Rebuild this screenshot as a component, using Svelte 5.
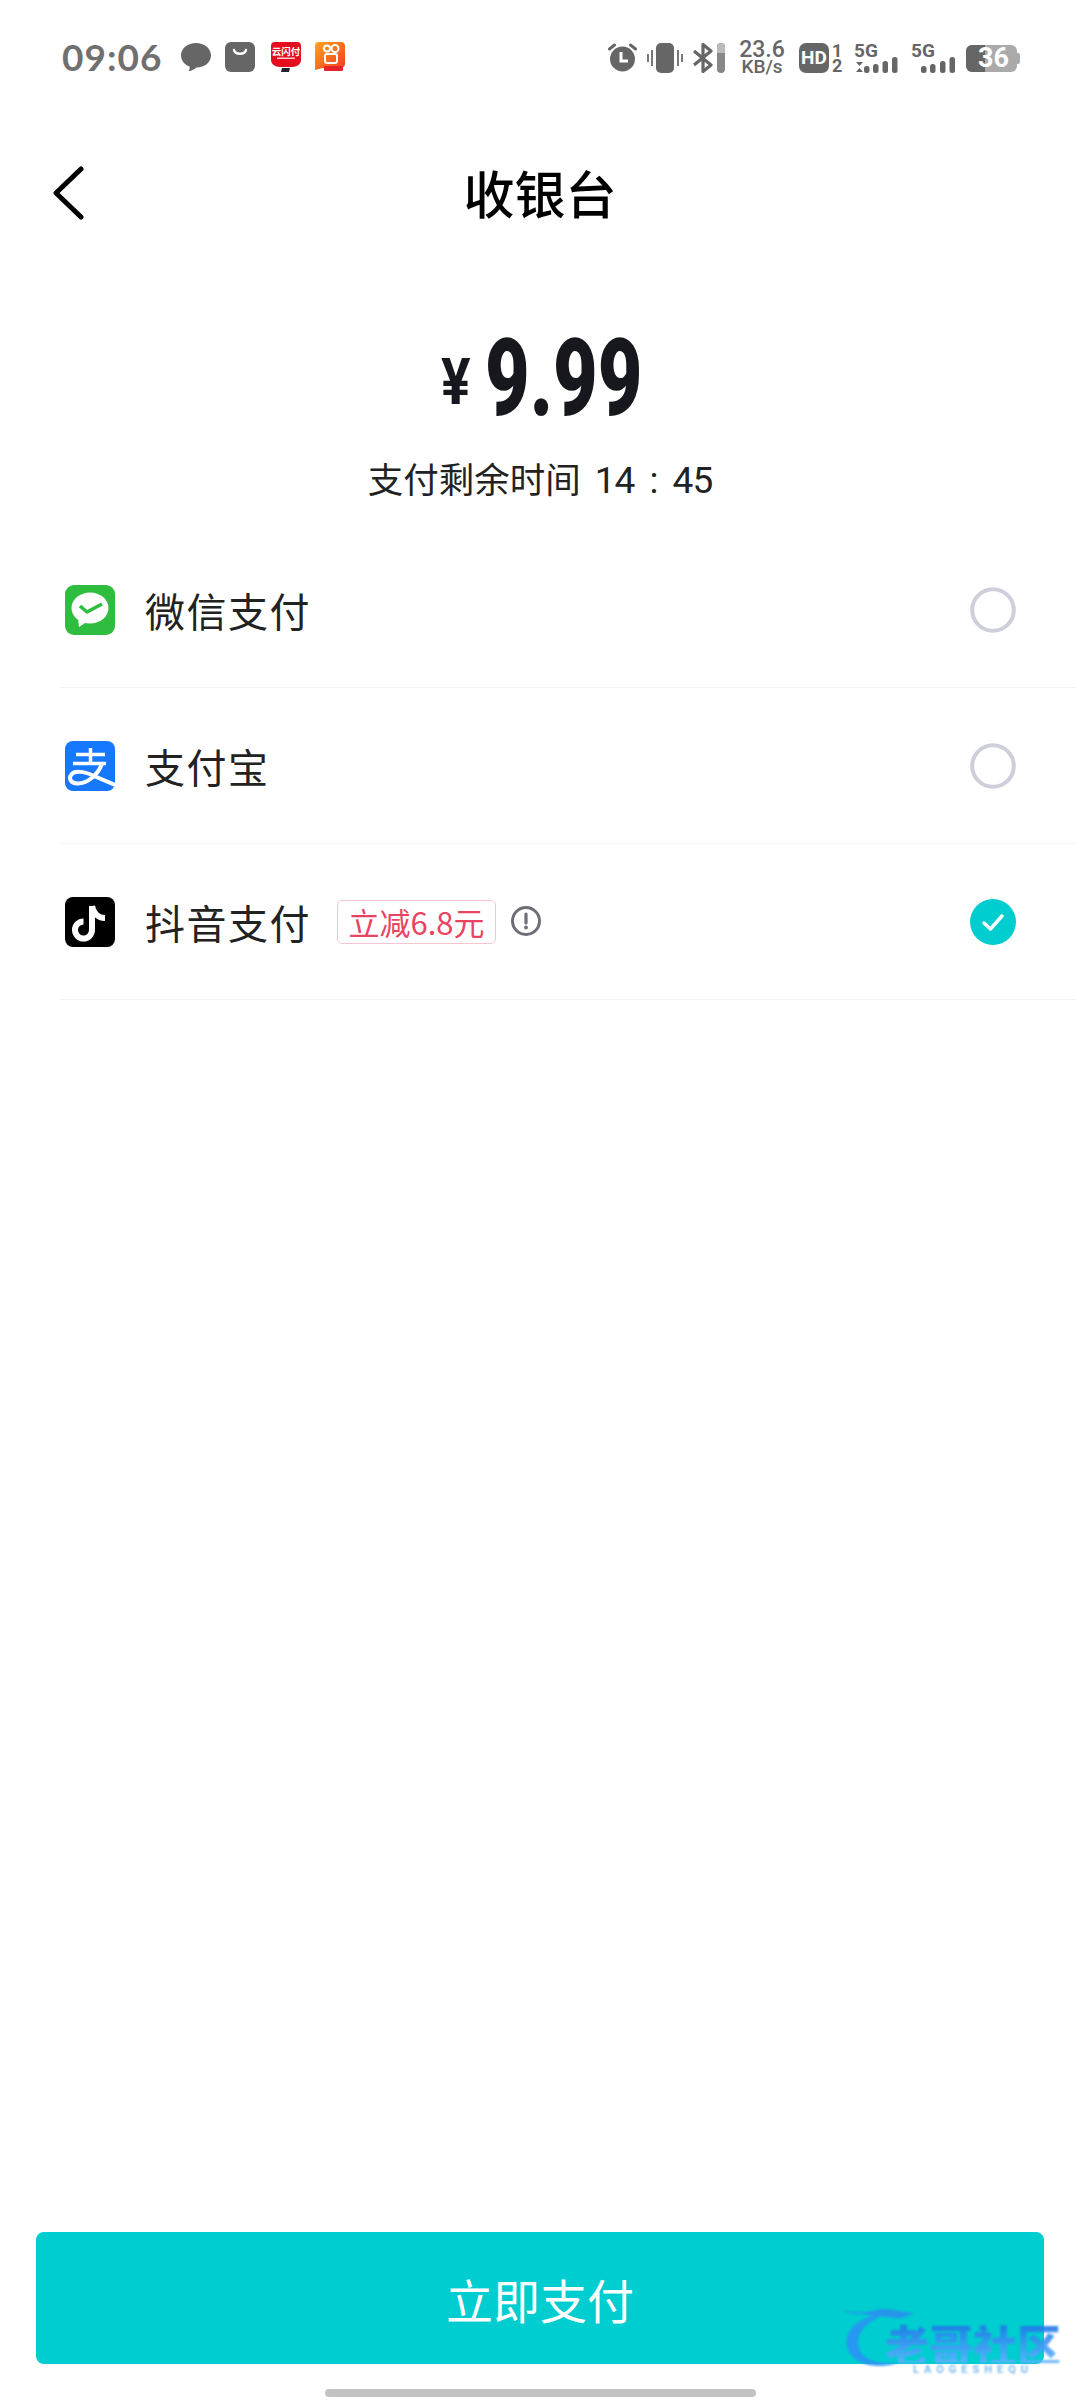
<!-- Checkout screen: amount, payment method list and pay button. -->
<script lang="ts">
    const methods = [
        { id: "wechat", name: "微信支付" },
        { id: "alipay", name: "支付宝" },
        { id: "douyin", name: "抖音支付", promo: "立减6.8元" },
    ];

    let selected = $state("douyin");
</script>

<div class="page">
    <div class="status">
        <span class="time">09:06</span>
        <svg class="ml17" width="30" height="30" viewBox="0 0 30 30">
            <path fill="#666" d="M15 1C7 1 0 6 0 13.500c0 5 3.500 9 8.500 11 .6 1.500-.2 3.500-1 4.500 3 .2 6-2 8-3.500C23.500 25.500 30 20.500 30 13.500 30 6 23 1 15 1z" />
        </svg>
        <svg class="ml14" width="30" height="30" viewBox="0 0 30 30">
            <rect width="30" height="30" rx="6" fill="#666" />
            <path d="M9 8c1 5 11 5 12 0" fill="none" stroke="#fff" stroke-width="2.500" stroke-linecap="round" />
        </svg>
        <svg class="ml16" width="30" height="30" viewBox="0 0 30 30">
            <path fill="#e60d1f" d="M4 0h22a4 4 0 0 1 4 4v14c0 4-4 7-9 7H9c-5 0-9-3-9-7V4a4 4 0 0 1 4-4z" />
            <text x="15" y="13" text-anchor="middle" class="tiny-cn">云闪付</text>
            <rect x="6" y="15.500" width="18" height="1.500" fill="#fff" opacity="0.8" />
            <path fill="#223" d="M11 26h8l-1 4h-8z" />
        </svg>
        <svg class="ml14" width="30" height="30" viewBox="0 0 30 30">
            <defs>
                <linearGradient id="ks" x1="0" y1="0" x2="1" y2="1">
                    <stop offset="0" stop-color="#ffa51c" />
                    <stop offset="1" stop-color="#f0391f" />
                </linearGradient>
            </defs>
            <path fill="url(#ks)" d="M4 0h22a4 4 0 0 1 4 4v18c0 2-2 4-4 4H8l-8 2V4a4 4 0 0 1 4-4z" />
            <circle cx="12" cy="6.500" r="3" fill="none" stroke="#fff" stroke-width="2" />
            <circle cx="20" cy="6.500" r="3.500" fill="none" stroke="#fff" stroke-width="2" />
            <rect x="10" y="12" width="12" height="9" rx="2" fill="none" stroke="#fff" stroke-width="2" />
            <rect x="9" y="24" width="19" height="5" rx="1" fill="#e8222a" />
        </svg>

        <div class="status-right">
            <svg width="29" height="29" viewBox="0 0 29 29">
                <circle cx="14.500" cy="16" r="12.500" fill="#666" />
                <path d="M1.500 6l5-4M27.500 6l-5-4" stroke="#666" stroke-width="3" stroke-linecap="round" />
                <path d="M13 9v9h7" fill="none" stroke="#fff" stroke-width="3" />
            </svg>
            <svg class="ml10" width="36" height="30" viewBox="0 0 36 30">
                <rect x="9" y="0" width="18" height="30" rx="5" fill="#666" />
                <path d="M1 11v8M5 7v16M31 7v16M35 11v8" stroke="#777" stroke-width="2" />
            </svg>
            <svg class="ml10" width="32" height="30" viewBox="0 0 32 30">
                <path d="M1 8l17 14-8 6.500V1.500l8 6.500L1 22" fill="none" stroke="#666" stroke-width="3.200" stroke-linejoin="round" />
                <rect x="24" y="0" width="8" height="30" rx="4" fill="#888" />
                <path d="M24 10V4a4 4 0 0 1 8 0v6z" fill="#bbb" />
            </svg>
            <div class="speed ml15">
                <span>23.6</span>
                <span class="unit">KB/s</span>
            </div>
            <div class="hd ml15">
                <span class="hd-box">HD</span>
                <div class="sims">
                    <span>1</span>
                    <span>2</span>
                </div>
            </div>
            <div class="signal ml12">
                <span class="net">5G</span>
                <svg width="44" height="31" viewBox="0 0 44 31">
                    <path fill="#666" d="M2 19l3.500 4 3.500-4zM2 29h7l-3.500-4z" />
                    <rect x="10" y="23" width="5.500" height="7" rx="2.500" fill="#666" />
                    <rect x="19" y="21" width="5.500" height="9" rx="2.500" fill="#666" />
                    <rect x="28.500" y="18" width="5.500" height="12" rx="2.500" fill="#666" />
                    <rect x="38" y="14" width="5.500" height="16" rx="2.500" fill="#666" />
                </svg>
            </div>
            <div class="signal ml13">
                <span class="net">5G</span>
                <svg width="44" height="31" viewBox="0 0 44 31">
                    <rect x="10" y="23" width="5.500" height="7" rx="2.500" fill="#666" />
                    <rect x="19" y="21" width="5.500" height="9" rx="2.500" fill="#666" />
                    <rect x="29" y="18" width="5.500" height="12" rx="2.500" fill="#666" />
                    <rect x="38.500" y="14" width="5.500" height="16" rx="2.500" fill="#666" />
                </svg>
            </div>
            <div class="battery ml11">
                <span class="battery-level"></span>
                <span class="battery-text">36</span>
            </div>
        </div>
    </div>

    <header class="header">
        <button type="button" class="back" aria-label="返回">
            <svg width="36" height="56" viewBox="0 0 36 56">
                <path d="M31 5L6 29l25 24" fill="none" stroke="#000" stroke-width="5" stroke-linecap="round" stroke-linejoin="round" />
            </svg>
        </button>
        <h1 class="title">收银台</h1>
        <span></span>
    </header>

    <section class="amount">
        <div class="price">
            <span class="currency">¥</span>
            <span class="value">9.99</span>
        </div>
        <p class="remain">支付剩余时间 <span class="clock">14 : 45</span></p>
    </section>

    <ul class="methods">
        {#each methods as method}
            <li>
                <button type="button" class="method" onclick={() => (selected = method.id)}>
                    {#if method.id === "wechat"}
                        <svg class="logo" viewBox="0 0 50 50">
                            <rect width="50" height="50" rx="9" fill="#2fbd3f" />
                            <ellipse cx="25" cy="23" rx="18.500" ry="15.500" fill="#fff" />
                            <path d="M13 33l1 9 9-6z" fill="#fff" />
                            <path d="M15 21l7 6 15-8" fill="none" stroke="#2fbd3f" stroke-width="3.500" stroke-linejoin="round" />
                        </svg>
                    {:else if method.id === "alipay"}
                        <svg class="logo" viewBox="0 0 50 50">
                            <rect width="50" height="50" rx="8" fill="#1677ff" />
                            <path d="M11 13.500h29M25.500 7v15M8 22.500h33" fill="none" stroke="#fff" stroke-width="3.500" />
                            <path d="M37 22.500C33 34 22 43 12 42.500 6 42 4 38 5.500 35 8 29 19 30 29 35l21 9" fill="none" stroke="#fff" stroke-width="4" />
                        </svg>
                    {:else}
                        <svg class="logo" viewBox="0 0 50 50">
                            <rect width="50" height="50" rx="8" fill="#000" />
                            <path d="M27 9v24a8.500 8.500 0 1 1-8.500-8.500M27 9c1 7 6 12 13 12" fill="none" stroke="#fff" stroke-width="6" />
                        </svg>
                    {/if}
                    <span class="name">{method.name}</span>
                    {#if method.promo}
                        <span class="promo">{method.promo}</span>
                        <svg class="info" width="30" height="30" viewBox="0 0 30 30">
                            <circle cx="15" cy="15" r="13.500" fill="none" stroke="#6e6e78" stroke-width="3" />
                            <path d="M15 8v9" stroke="#6e6e78" stroke-width="3.200" stroke-linecap="round" />
                            <circle cx="15" cy="21.500" r="1.900" fill="#6e6e78" />
                        </svg>
                    {/if}
                    {#if selected === method.id}
                        <svg class="radio" viewBox="0 0 46 46">
                            <circle cx="23" cy="23" r="23" fill="#00cdcf" />
                            <path d="M14 24l6.500 6L32 17" fill="none" stroke="#fff" stroke-width="3.500" stroke-linecap="round" stroke-linejoin="round" />
                        </svg>
                    {:else}
                        <svg class="radio" viewBox="0 0 46 46">
                            <circle cx="23" cy="23" r="20.800" fill="none" stroke="#cfcfdc" stroke-width="4" />
                        </svg>
                    {/if}
                </button>
            </li>
        {/each}
    </ul>

    <footer class="footer">
        <button type="button" class="pay">立即支付</button>
        <div class="home-bar"></div>
    </footer>

    <div class="watermark">
        <svg width="90" height="66" viewBox="0 0 90 66">
            <path d="M38 8C10 12-2 30 6 46c8 14 32 18 52 10-18 3-38 0-42-14C12 28 24 14 42 9z" fill="#2b93f5" />
            <path d="M0 4c10 3 20 3 30 1 14-5 24 1 42 2-8 2-10 6-20 5C40 11 30 9 18 8 10 8 4 7 0 4z" fill="#2b8ff0" />
        </svg>
        <div class="mark-text">
            <span class="mark-cn">老哥社区</span>
            <span class="mark-en">LAOGESHEQU</span>
        </div>
    </div>
</div>

<style>
    :global(body) {
        margin: 0;
        background: #fff;
    }

    .page {
        position: relative;
        width: 1080px;
        height: 2400px;
        display: flex;
        flex-direction: column;
        overflow: hidden;
        background: #fff;
        font-family: "Noto Sans CJK SC", "Noto Sans", sans-serif;
    }

    .status {
        display: flex;
        align-items: flex-start;
        height: 42px;
        padding: 42px 60px 0 62px;
        color: #666;
    }

    .status svg {
        flex: none;
    }

    .time {
        width: 102px;
        font-family: Lato, sans-serif;
        font-size: 37px;
        font-weight: 700;
        line-height: 30px;
        letter-spacing: 1px;
        color: #707070;
    }

    .tiny-cn {
        font-size: 9.500px;
        font-weight: 700;
        fill: #fff;
    }

    .ml10 { margin-left: 10px; }
    .ml11 { margin-left: 11px; }
    .ml12 { margin-left: 12px; }
    .ml13 { margin-left: 13px; }
    .ml14 { margin-left: 14px; }
    .ml15 { margin-left: 15px; }
    .ml16 { margin-left: 16px; }
    .ml17 { margin-left: 17px; }

    .status-right {
        display: flex;
        align-items: flex-start;
        margin-left: auto;
        margin-top: 1px;
    }

    .speed {
        width: 44px;
        display: flex;
        flex-direction: column;
        align-items: center;
        margin-top: -3px;
        font-family: Roboto, sans-serif;
        font-size: 23px;
        line-height: 19px;
        font-weight: 500;
    }

    .unit {
        font-size: 19px;
        line-height: 15px;
    }

    .hd {
        display: flex;
        gap: 3px;
        font-family: Roboto, sans-serif;
        font-weight: 700;
    }

    .hd-box {
        width: 30px;
        height: 30px;
        border-radius: 7px;
        background: #666;
        color: #fff;
        font-size: 19px;
        line-height: 30px;
        text-align: center;
    }

    .sims {
        width: 10px;
        display: flex;
        flex-direction: column;
        font-size: 18px;
        line-height: 15px;
        text-align: center;
    }

    .signal {
        position: relative;
        width: 44px;
        height: 31px;
    }

    .signal svg {
        display: block;
    }

    .net {
        position: absolute;
        left: 0;
        top: 0;
        font-family: Roboto, sans-serif;
        font-size: 19px;
        line-height: 16px;
        font-weight: 700;
    }

    .battery {
        position: relative;
        width: 51px;
        height: 27px;
        margin-top: 2px;
        margin-right: 3px;
        border-radius: 6px;
        background: #aaa;
        overflow: visible;
    }

    .battery::after {
        content: "";
        position: absolute;
        right: -3px;
        top: 8px;
        width: 3px;
        height: 11px;
        border-radius: 0 2px 2px 0;
        background: #aaa;
    }

    .battery-level {
        position: absolute;
        left: 0;
        top: 0;
        bottom: 0;
        width: 19px;
        border-radius: 6px 0 0 6px;
        background: #666;
    }

    .battery-text {
        position: absolute;
        left: 12px;
        top: 0;
        font-family: Roboto, sans-serif;
        font-size: 27px;
        line-height: 27px;
        font-weight: 700;
        color: #fff;
    }

    .header {
        display: grid;
        grid-template-columns: 1fr auto 1fr;
        align-items: center;
        height: 70px;
        margin-top: 73px;
    }

    .back {
        width: 36px;
        height: 56px;
        margin-left: 50px;
        padding: 0;
        border: 0;
        background: none;
    }

    .title {
        margin: 0;
        font-size: 51px;
        line-height: 70px;
        font-weight: 500;
        color: #000;
    }

    .amount {
        display: flex;
        flex-direction: column;
        align-items: center;
        margin-top: 102px;
    }

    .price {
        display: flex;
        align-items: flex-end;
        height: 100px;
        font-family: Roboto, sans-serif;
        font-weight: 900;
        color: #16181d;
    }

    .currency {
        width: 44px;
        font-size: 65px;
        font-weight: 700;
        line-height: 93px;
        transform: scaleX(0.85);
        transform-origin: left center;
    }

    .value {
        width: 155px;
        font-size: 107px;
        line-height: 100px;
        white-space: nowrap;
        transform: scaleX(0.72);
        transform-origin: left center;
    }

    .remain {
        margin: 24px 0 0;
        font-size: 35.500px;
        line-height: 50px;
        color: #222;
    }

    .clock {
        margin-left: 6px;
        font-family: Roboto, sans-serif;
        font-size: 37px;
        letter-spacing: -1px;
        word-spacing: 7px;
    }

    .methods {
        list-style: none;
        margin: 0 4px 0 60px;
        padding: 0;
        padding-top: 26px;
    }

    .method {
        width: 100%;
        height: 156px;
        display: flex;
        align-items: center;
        padding: 0 60px 0 5px;
        border: 0;
        border-bottom: 1px solid #f4f4f4;
        background: none;
        font-family: inherit;
        color: #222;
    }

    .logo {
        width: 50px;
        height: 50px;
        flex: none;
    }

    .name {
        margin-left: 30px;
        font-size: 40px;
        letter-spacing: 1.500px;
    }

    .promo {
        margin-left: 26px;
        width: 159px;
        height: 44px;
        box-sizing: border-box;
        border: 1px solid #f5c6d0;
        border-radius: 5px;
        color: #e8445f;
        font-size: 31px;
        line-height: 41px;
        text-align: center;
    }

    .info {
        margin-left: 15px;
        margin-top: -1px;
    }

    .radio {
        width: 46px;
        height: 46px;
        margin-left: auto;
        flex: none;
    }

    .footer {
        margin-top: auto;
        display: flex;
        flex-direction: column;
        align-items: center;
        padding-bottom: 3px;
    }

    .pay {
        width: 1008px;
        height: 132px;
        border: 0;
        border-radius: 8px;
        background: #00cdcf;
        color: #fff;
        font-family: inherit;
        font-size: 47px;
    }

    .home-bar {
        width: 431px;
        height: 8px;
        margin-top: 25px;
        border-radius: 4px;
        background: #c2c2c2;
    }

    .watermark {
        position: absolute;
        left: 843px;
        top: 2306px;
        width: 222px;
        height: 68px;
        filter: blur(0.8px);
        opacity: 0.9;
    }

    .watermark svg {
        position: absolute;
        left: 0;
        top: 0;
    }

    .mark-text {
        position: absolute;
        left: 42px;
        top: 19px;
        display: flex;
        flex-direction: column;
        align-items: center;
    }

    .mark-cn {
        font-size: 44px;
        line-height: 38px;
        font-weight: 900;
        white-space: nowrap;
        background: linear-gradient(#1f78e8, #5fb4ff);
        -webkit-background-clip: text;
        background-clip: text;
        color: transparent;
    }

    .mark-en {
        margin-top: 1px;
        font-family: Roboto, sans-serif;
        font-size: 11px;
        line-height: 12px;
        font-weight: 700;
        letter-spacing: 5px;
        color: #2f93ea;
        opacity: 0.7;
    }
</style>
